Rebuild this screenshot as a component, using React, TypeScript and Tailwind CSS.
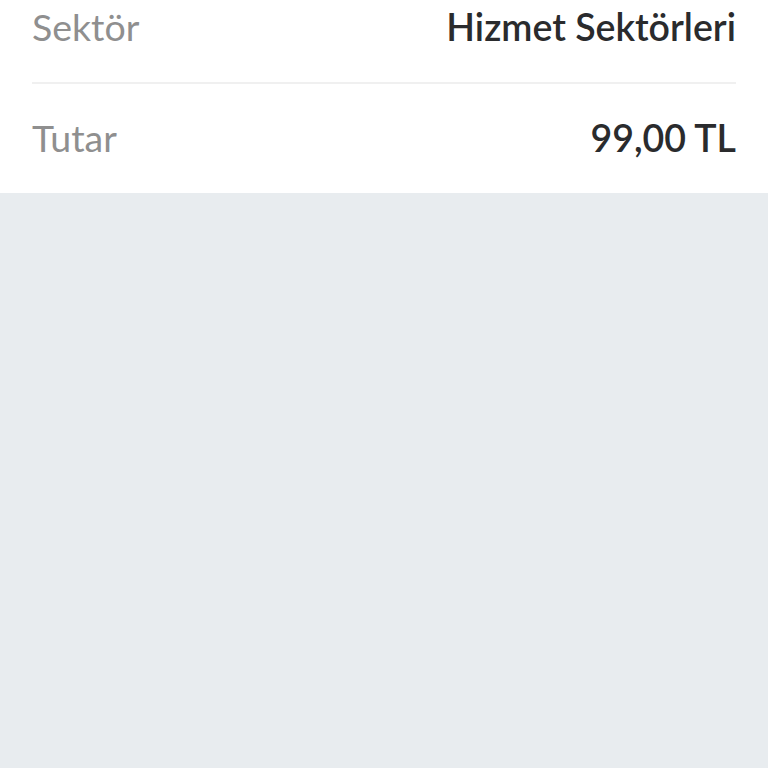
const rows = [
  { label: "Sektör", value: "Hizmet Sektörleri" },
  { label: "Tutar", value: "99,00 TL" },
];

export default function App() {
  return (
    <div className="h-[768px] w-[768px] overflow-hidden bg-[#e8ecef] font-['Lato',sans-serif]">
      <div className="bg-white px-8">
        <div className="-mt-[27px]">
          {rows.map((row, i) => (
            <div
              key={row.label}
              className={
                i === 0
                  ? "flex h-[111px] items-center justify-between border-b-2 border-[#f0f0f0]"
                  : "flex h-[109px] items-center justify-between"
              }
            >
              <span className="text-[37.5px] font-normal text-[#8f8f8f]">{row.label}</span>
              <span className="text-[37.5px] font-semibold text-[#2a2b2d]">{row.value}</span>
            </div>
          ))}
        </div>
      </div>
    </div>
  );
}
